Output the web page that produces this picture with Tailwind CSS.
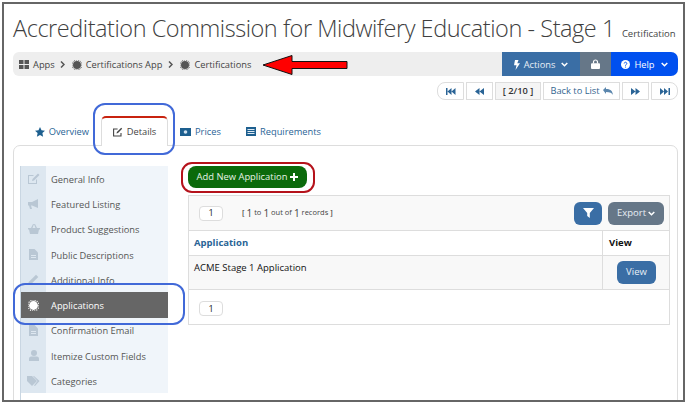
<!DOCTYPE html>
<html lang="en">
<head>
  <meta charset="UTF-8">
  <title>Certifications</title>
  <script src="https://cdn.jsdelivr.net/npm/@tailwindcss/browser@4"></script>
</head>
<body class="bg-white font-['Open_Sans',sans-serif] overflow-hidden">
<div class="relative w-[687px] h-[404px] p-[2px]">
  <div class="w-[683px] h-[400px] border-[2.5px] border-[#666] overflow-hidden pl-[9px] pr-[5px] bg-white">

    <!-- title -->
    <div class="h-[48px] flex items-baseline pt-[4px] text-[#3f3f3f] whitespace-nowrap">
      <span class="text-[23.5px] leading-[40px] font-light tracking-[-0.45px]">Accreditation Commission for Midwifery Education - Stage 1</span>
      <span class="text-[9.5px] ml-[7px] text-[#444]">Certification</span>
    </div>

    <!-- breadcrumb -->
    <div class="h-[24px] w-[665px] flex bg-[#eee] rounded-l-[6px] rounded-r-[7px] text-[9.3px] text-[#444]">
      <div class="flex-1 flex items-center pl-[6px] pt-[1px]">
        <svg class="w-[10px] h-[9px] mr-[4px]" viewBox="0 0 10 9" fill="#555"><path d="M0 0h4.500v4H0zM5.500 0H10v4H5.500zM0 5h4.500v4H0zM5.500 5H10v4H5.500z"/></svg>
        <span>Apps</span>
        <svg class="w-[5px] h-[7px] ml-[5px] mr-[7px]" viewBox="0 0 5 7" fill="none" stroke="#555" stroke-width="1.500"><path d="M1 .5l3 3-3 3"/></svg>
        <svg class="w-[10px] h-[10px] mr-[4px]" viewBox="0 0 10 10" fill="#555"><circle cx="5" cy="5" r="4"/><circle cx="5" cy="5" r="5" fill="none" stroke="#555" stroke-dasharray="1 1"/></svg>
        <span>Certifications App</span>
        <svg class="w-[5px] h-[7px] ml-[6px] mr-[7px]" viewBox="0 0 5 7" fill="none" stroke="#555" stroke-width="1.500"><path d="M1 .5l3 3-3 3"/></svg>
        <svg class="w-[10px] h-[10px] mr-[4px]" viewBox="0 0 10 10" fill="#555"><circle cx="5" cy="5" r="4"/><circle cx="5" cy="5" r="5" fill="none" stroke="#555" stroke-dasharray="1 1"/></svg>
        <span>Certifications</span>
      </div>
      <div class="w-[78px] bg-[#3a6ea5] text-[#e8eef5] flex items-center justify-center gap-[4px] pt-[1px]">
        <svg class="w-[6px] h-[10px]" viewBox="0 0 6 10" fill="#fff"><path d="M1 0h3.500L3.300 3.300H6L1.500 10l1-4.700H0z"/></svg>
        <span>Actions</span>
        <svg class="w-[7px] h-[5px] ml-[2px]" viewBox="0 0 7 5" fill="none" stroke="#fff" stroke-width="1.500"><path d="M.7 1l2.800 2.800L6.300 1"/></svg>
      </div>
      <div class="w-[31px] bg-[#667788] flex items-center justify-center">
        <svg class="w-[9px] h-[10px]" viewBox="0 0 9 10" fill="none"><path d="M2.500 4.500V3a2 2 0 014 0v1.500" stroke="#fff" stroke-width="1.200"/><rect y="4.200" width="9" height="5.800" rx="1" fill="#fff"/></svg>
      </div>
      <div class="w-[67px] bg-[#0050ef] text-white rounded-r-[7px] flex items-center justify-center gap-[4px] pt-[1px]">
        <svg class="w-[9px] h-[9px]" viewBox="0 0 9 9"><circle cx="4.500" cy="4.500" r="4.500" fill="#fff"/><path d="M3.200 3.500a1.300 1.300 0 112 1.100c-.5.300-.7.500-.7 1" fill="none" stroke="#0050ef"/><circle cx="4.500" cy="7" r=".6" fill="#0050ef"/></svg>
        <span>Help</span>
        <svg class="w-[7px] h-[5px] ml-[2px]" viewBox="0 0 7 5" fill="none" stroke="#fff" stroke-width="1.500"><path d="M.7 1l2.800 2.800L6.300 1"/></svg>
      </div>
    </div>

    <!-- pager -->
    <div class="h-[18px] w-[665px] mt-[6px] flex justify-end gap-[2px] text-[9.3px] text-[#33658f]">
      <div class="w-[27px] border border-[#ddd] rounded-l-[8px] flex items-center justify-center"><svg class="w-[10px] h-[7px]" viewBox="0 0 10 7" fill="#2a6496"><path d="M0 0h1.500v7H0zM1.500 3.500L5.500 0v7zM5.500 3.500L9.500 0v7z"/></svg></div>
      <div class="w-[27px] border border-[#ddd] flex items-center justify-center"><svg class="w-[9px] h-[7px]" viewBox="0 0 9 7" fill="#2a6496"><path d="M0 3.500L4.500 0v7zM4.500 3.500L9 0v7z"/></svg></div>
      <div class="w-[46px] border border-[#ddd] bg-[#f5f5f5] text-[#333] flex items-center justify-center font-semibold">[ 2/10 ]</div>
      <div class="w-[77px] border border-[#ddd] flex items-center justify-center gap-[3px]">
        <span>Back to List</span>
        <svg class="w-[10px] h-[8px]" viewBox="0 0 10 8" fill="#5b86ad"><path d="M0 3l3-3v2c4 0 6.500 1.500 7 6-1-2-3-3-7-3v2z"/></svg>
      </div>
      <div class="w-[27px] border border-[#ddd] flex items-center justify-center"><svg class="w-[9px] h-[7px]" viewBox="0 0 9 7" fill="#2a6496"><path d="M0 0l4.500 3.500L0 7zM4.500 0L9 3.500 4.500 7z"/></svg></div>
      <div class="w-[27px] border border-[#ddd] rounded-r-[8px] flex items-center justify-center"><svg class="w-[10px] h-[7px]" viewBox="0 0 10 7" fill="#2a6496"><path d="M0 0l4 3.500L0 7zM4 0l4 3.500L4 7zM8.500 0H10v7H8.500z"/></svg></div>
    </div>

    <!-- tabs -->
    <div class="h-[30px] mt-[16px] flex items-stretch text-[9.3px] text-[#2a6496] relative z-10">
      <div class="w-[88px] flex items-center justify-end pr-[12px] gap-[4px] pt-[1px]">
        <svg class="w-[10px] h-[10px]" viewBox="0 0 10 10" fill="#1d5f8f"><path d="M5 0l1.500 3.300 3.500.400-2.600 2.400.7 3.600L5 8l-3.100 1.700.7-3.600L0 3.700l3.500-.400z"/></svg>
        <span>Overview</span>
      </div>
      <div class="w-[67px] bg-white border-t-[2px] border-t-[#c8230f] border-x border-x-[#ddd] rounded-t-[5px] text-[#444] flex items-center justify-center gap-[4px] h-[30px]">
        <svg class="w-[10px] h-[10px]" viewBox="0 0 10 10" fill="none" stroke="#444" stroke-width="1.100"><path d="M8 6v3H.6V2h4"/><path d="M3.500 6.500l.4-1.500L8.200.8l1 1L5 6z" fill="#444" stroke="none"/></svg>
        <span>Details</span>
      </div>
      <div class="w-[65px] flex items-center pl-[12px] gap-[4px] pt-[1px]">
        <svg class="w-[11px] h-[8px]" viewBox="0 0 11 8"><rect width="11" height="8" fill="#1d5f8f"/><circle cx="5.500" cy="4" r="1.800" fill="#cfe0ee"/></svg>
        <span>Prices</span>
      </div>
      <div class="w-[90px] flex items-center pl-[13px] gap-[4px] pt-[1px] whitespace-nowrap">
        <svg class="w-[10px] h-[9px]" viewBox="0 0 10 9" fill="#1d5f8f"><path d="M0 0h10v9H0z"/><path d="M1.500 2h7v1h-7zM1.500 4h7v1h-7zM1.500 6h7v1h-7z" fill="#dce8f2"/></svg>
        <span>Requirements</span>
      </div>
    </div>

    <!-- panel -->
    <div class="w-[665px] h-[300px] -mt-px border border-[#ddd] rounded-t-[7px] pt-[20px] pl-[6px] flex">
      <!-- side menu -->
      <div class="w-[148px] shrink-0 flex flex-col text-[9.3px] text-[#555] border-l-[1px] border-l-[#c9d6e2]">
        <div class="h-[25px] flex bg-[#f0f5fa] items-center"><div class="w-[25px] h-full bg-[#dde7f0] flex items-center justify-center"><svg class="w-[12px] h-[11px]" viewBox="0 0 12 11" fill="#b9c7d4"><path d="M0 2h6L5 3H1v7h7V7l1-1v5H0z"/><path d="M4 8l.5-2L10 .5 11.500 2 6 7.500z"/></svg></div><span class="pl-[5px] pt-[3px]">General Info</span></div>
        <div class="h-[25px] flex bg-[#f0f5fa] items-center"><div class="w-[25px] h-full bg-[#dde7f0] flex items-center justify-center"><svg class="w-[12px] h-[10px]" viewBox="0 0 12 10" fill="#b9c7d4"><path d="M0 3h4l6-3v9L4 6.500H3L4 10H2L1 6.500H0z"/></svg></div><span class="pl-[5px] pt-[3px]">Featured Listing</span></div>
        <div class="h-[26px] flex bg-[#f0f5fa] items-center"><div class="w-[25px] h-full bg-[#dde7f0] flex items-center justify-center"><svg class="w-[12px] h-[10px]" viewBox="0 0 12 10" fill="#b9c7d4"><path d="M0 4h12v1.500h-1L10 10H2L1 5.500H0zM3 4l2-4h1L4.500 4zM9 4L7 0H6l1.500 4z"/></svg></div><span class="pl-[5px] pt-[1px]">Product Suggestions</span></div>
        <div class="h-[25px] flex bg-[#f0f5fa] items-center"><div class="w-[25px] h-full bg-[#dde7f0] flex items-center justify-center"><svg class="w-[9px] h-[11px]" viewBox="0 0 9 11" fill="#b9c7d4"><path d="M0 0h5.500L9 3.500V11H0z"/><path d="M2 6h5v1H2zM2 8h5v1H2z" fill="#dde7f0"/></svg></div><span class="pl-[5px] pt-[3px]">Public Descriptions</span></div>
        <div class="h-[25px] flex bg-[#f0f5fa] items-center"><div class="w-[25px] h-full bg-[#dde7f0] flex items-center justify-center"><svg class="w-[11px] h-[11px]" viewBox="0 0 11 11" fill="#b9c7d4"><path d="M0 11l.7-3L8 .7 10.300 3 3 10.300z"/></svg></div><span class="pl-[5px] pt-[3px]">Additional Info</span></div>
        <div class="h-[26px] flex bg-[#666] text-white items-center"><div class="w-[25px] h-full flex items-center justify-center"><svg class="w-[11px] h-[11px]" viewBox="0 0 10 10" fill="#fff"><circle cx="5" cy="5" r="4"/><circle cx="5" cy="5" r="5" fill="none" stroke="#fff" stroke-dasharray="1 1"/></svg></div><span class="pl-[5px] pt-[1px]">Applications</span></div>
        <div class="h-[25px] flex bg-[#f0f5fa] items-center"><div class="w-[25px] h-full bg-[#dde7f0] flex items-center justify-center"><svg class="w-[9px] h-[11px]" viewBox="0 0 9 11" fill="#b9c7d4"><path d="M0 0h5.500L9 3.500V11H0z"/><path d="M2 6h5v1H2zM2 8h5v1H2z" fill="#dde7f0"/></svg></div><span class="pl-[5px] pt-[1px]">Confirmation Email</span></div>
        <div class="h-[25px] flex bg-[#f0f5fa] items-center"><div class="w-[25px] h-full bg-[#dde7f0] flex items-center justify-center"><svg class="w-[10px] h-[11px]" viewBox="0 0 10 11" fill="#b9c7d4"><circle cx="5" cy="3" r="3"/><path d="M0 11V8.500C0 7 1.500 6.500 3 6.500h4c1.500 0 3 .5 3 2V11z"/></svg></div><span class="pl-[5px] pt-[3px]">Itemize Custom Fields</span></div>
        <div class="h-[25px] flex bg-[#f0f5fa] items-center"><div class="w-[25px] h-full bg-[#dde7f0] flex items-center justify-center"><svg class="w-[13px] h-[10px]" viewBox="0 0 13 10" fill="#b9c7d4"><path d="M0 0h5l5 5-5 5-5-5z"/><path d="M7 0l5.500 5L8 10l-1-.5L10.500 5 6 0z"/></svg></div><span class="pl-[5px] pt-[3px]">Categories</span></div>
      </div>

      <!-- content -->
      <div class="ml-[20px] w-[482px]">
        <div class="h-[22px] w-[119px] mb-[7px] bg-[#0b6a0b] text-[#e6f3e6] rounded-[8px] text-[9.4px] font-medium flex items-center justify-center gap-[3px]">
          <span>Add New Application</span>
          <svg class="w-[8px] h-[8px]" viewBox="0 0 8 8" fill="#fff"><path d="M3 0h2v3h3v2H5v3H3V5H0V3h3z"/></svg>
        </div>

        <div class="border border-[#ddd] text-[9.5px] text-[#222]">
          <div class="h-[35px] bg-[#f9f9f9] border-b border-[#ddd] flex items-center pl-[10px] pr-[5px]">
            <div class="w-[24px] h-[15px] border border-[#ddd] rounded-[4px] bg-white text-[9px] flex items-center justify-center">1</div>
            <div class="ml-[19px] text-[#444] text-[7.5px] flex items-center gap-[2px]"><span class="font-semibold">[</span><span class="text-[10px]">1</span><span>to</span><span class="text-[10px]">1</span><span>out of</span><span class="text-[10px]">1</span><span>records</span><span class="font-semibold">]</span></div>
            <div class="ml-auto w-[28px] h-[23px] bg-[#3a6ea5] rounded-[6px] flex items-center justify-center"><svg class="w-[11px] h-[10px]" viewBox="0 0 11 10" fill="#fff"><path d="M0 0h11L6.800 5v5L4.200 8V5z"/></svg></div>
            <div class="ml-[6px] w-[56px] h-[23px] bg-[#667788] text-[#e8eef5] rounded-[6px] flex items-center justify-center gap-[2px]">
              <span>Export</span>
              <svg class="w-[7px] h-[5px]" viewBox="0 0 7 5" fill="none" stroke="#fff" stroke-width="1.500"><path d="M.7 1l2.800 2.800L6.300 1"/></svg>
            </div>
          </div>
          <div class="h-[25px] flex border-b border-[#ddd] font-bold">
            <div class="w-[413px] pl-[5px] flex items-center text-[#2a6496]">Application</div>
            <div class="flex-1 border-l border-[#ddd] pl-[6px] flex items-center text-[#111]">View</div>
          </div>
          <div class="h-[34px] flex border-b border-[#ddd] bg-[#f8f8f8]">
            <div class="w-[413px] pl-[5px] pt-[5px] text-[#111]">ACME Stage 1 Application</div>
            <div class="flex-1 border-l border-[#ddd] pl-[14px] pt-[5px]">
              <div class="w-[39px] h-[23px] bg-[#3a6ea5] text-[#e8eef5] rounded-[6px] flex items-center justify-center">View</div>
            </div>
          </div>
          <div class="h-[34px] pl-[10px] pt-[11px]">
            <div class="w-[24px] h-[15px] border border-[#ddd] rounded-[4px] bg-white text-[9px] flex items-center justify-center">1</div>
          </div>
        </div>
      </div>
    </div>
  </div>

  <!-- annotations -->
  <svg class="absolute left-[262px] top-[54px] w-[87px] h-[22px]" viewBox="0 0 87 22"><path d="M1 11L30 1.500V7.500H85V14.500H30V20.500z" fill="#f00" stroke="#111" stroke-width="1"/></svg>
  <div class="absolute left-[93px] top-[103px] w-[82px] h-[52px] border-2 border-[#4169d8] rounded-[12px]"></div>
  <div class="absolute left-[13px] top-[283px] w-[172px] h-[42px] border-2 border-[#4169d8] rounded-[12px]"></div>
  <div class="absolute left-[181px] top-[162px] w-[134px] h-[31px] border-2 border-[#b5121b] rounded-[11px]"></div>
</div>
</body>
</html>
